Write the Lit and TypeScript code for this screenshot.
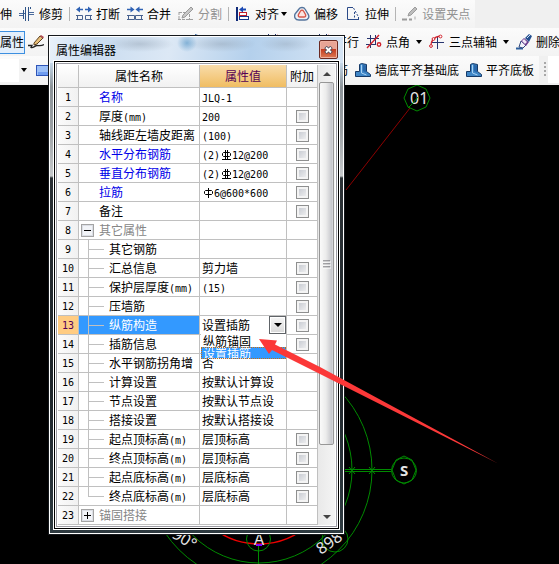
import { LitElement, html, svg, css, nothing, TemplateResult, SVGTemplateResult } from "lit";
import { customElement, property, state } from "lit/decorators.js";
import { classMap } from "lit/directives/class-map.js";

const ICONS: Record<string, SVGTemplateResult> = {
  trim: svg`<path d="M0 7.500h6M0 9.500h4M10 6.500h5M10 8.500h5" stroke="#4a6a9c" fill="none"/>
    <path d="M4.500 4v9M6.500 1v14M9.500 1v14M11.500 1v2" stroke="#2f5488" fill="none"/>`,
  break: svg`<path d="M4 .5L0 3.500l4 3zM12 .5l4 3-4 3z" fill="#2f62b4"/>
    <path d="M3 3.500h4M9 3.500h4" stroke="#2f62b4" stroke-width="1.500"/>
    <path d="M0 9.500h6.500v4H0M1.500 9.500v4M16 9.500H9.500v4H16M14.500 9.500v4" fill="none" stroke="#47618f"/>`,
  merge: svg`<path d="M3.500 .5L7.500 3.500l-4 3zM12.500 .5L8.500 3.500l4 3z" fill="#2f62b4"/>
    <path d="M0 3.500h4M12 3.500h4" stroke="#2f62b4" stroke-width="1.500"/>
    <path d="M0 9.500h7.500v4H0M1.500 9.500v4M16 9.500H8.500v4H16M14.500 9.500v4" fill="none" stroke="#47618f"/>`,
  split: svg`<path d="M1 6.500h7M1 6v8M0 13.500h15M11.500 8v6" stroke="#a0a0a0" fill="none" stroke-dasharray="3 1"/>
    <path d="M4 12l1-3 8-8 2 2-8 8z" fill="#c8c8c8" stroke="#9a9a9a"/>`,
  align: svg`<path d="M2 1v14" stroke="#102a78" stroke-width="2"/><path d="M11 3.500H6" stroke="#1b49b4" stroke-width="2"/><path d="M8 .5L4 3.500l4 3z" fill="#1b49b4"/>
    <rect x="4.500" y="6.500" width="7" height="3" fill="#fff" stroke="#c31f2c"/><rect x="4.500" y="10.500" width="9" height="3" fill="#fff" stroke="#17378c"/>`,
  offset: svg`<path d="M5 3c1-2 5-2 6 0l3 5c2 3 0 6-3 6H5c-4 0-5-3-4-6z" fill="#eef2f8" stroke="#55749c" stroke-width="1.400"/>
    <path d="M6.500 5c.5-1 2.500-1 3 0l2 3.500c.5 1.500 0 2.500-1.500 2.500H6c-1.500 0-2-1-1.500-2.500z" fill="#fde4e0" stroke="#d8584a" stroke-width="1.400"/>`,
  stretch: svg`<path d="M8 1.500H2.500v12H13" stroke="#2b4a88" fill="none"/><path d="M8.500 2l5 9" stroke="#2b4a88" fill="none" stroke-dasharray="2 1.500"/><path d="M9.500 6v7" stroke="#2b4a88" stroke-dasharray="2 1.500"/><path d="M13.500 11v3" stroke="#2b4a88"/>`,
  grip: svg`<path d="M0 13.500h5M7 13.500h3" stroke="#9a9a9a" stroke-width="2"/><path d="M6 10l1-3 6-6 2 2-6 6z" fill="#bdbdbd" stroke="#9c9c9c"/><path d="M13 10.500v3" stroke="#aaa"/>`,
  pencil: svg`<path d="M0 11.500h4l-1 2c2 1 4-2 6-2s4 1 7-1" stroke="#222" fill="none" stroke-width="1.300"/><path d="M6 9l6-7 3 2-6 6-3 1z" fill="#e8c07a" stroke="#5c4020"/><path d="M12 2l1-1 3 2-1 1.500z" fill="#b54a52"/>`,
  brush: svg`<path d="M1 14l3-5 3 3z" fill="#e8c880"/><path d="M4 9l7-7 3 2-7 8z" fill="#3d7bbd"/><path d="M11 0l3 1v3l-3-2z" fill="#2d5f9d"/>`,
  hash: svg`<path d="M4.500 0v15M11.500 0v15M0 4.500h15M0 11.500h16" stroke="#27356f"/><path d="M1 14L14 1" stroke="#d1222d" stroke-width="1.400"/>`,
  angle: svg`<path d="M4.500 1v13M9.500 1v10M1 4.500h12M0 10.500h10" stroke="#27356f"/><path d="M1 14L13 1" stroke="#d1222d" stroke-width="1.400"/><circle cx="13" cy="10.500" r="1.700" fill="#fff" stroke="#d1222d" stroke-width="1.400"/>`,
  three: svg`<path d="M8.500 3v12M3 8.500h12" stroke="#27356f"/><path d="M2 12C2 6 5 3 11 2" stroke="#d1222d" fill="none" stroke-width="1.300"/>
    <circle cx="2" cy="12" r="1.400" fill="#fff" stroke="#d1222d"/><circle cx="4.500" cy="5" r="1.400" fill="#fff" stroke="#d1222d"/><circle cx="11.500" cy="2.500" r="1.400" fill="#fff" stroke="#d1222d"/>`,
  eraser: svg`<path d="M0 14.500h7" stroke="#2d5f9d" stroke-width="2"/><path d="M3 13l2-6 5 4-3 3z" fill="#f2f2fa" stroke="#30487c"/><path d="M5 7l3-3 5 4-3 4z" fill="#6c3f8f"/><path d="M6 7l2-2 3 3-2 2z" fill="#f2e9f7"/><path d="M9 4l4-4 3 2-3 6z" fill="#244f8f"/><path d="M11 4l3-3" stroke="#cfe2f5"/>`,
  wall: svg`<path d="M4.500 2.500l2-1 5 1v7l4 3v2H.5v-5h4z" fill="#3f86c6" stroke="#163a68" stroke-linejoin="round"/><path d="M6.500 3v8l5 2" stroke="#a9d2f5" fill="none"/><path d="M8 3l3 .5v7L8 9z" fill="#2a68ab"/>`,
  beam: svg`<rect x=".5" y="3.500" width="15" height="10" fill="#9cc0f8" stroke="#2f55b8"/><path d="M2 11.500h13" stroke="#6f9cf0" stroke-width="3"/>`,
};

const icon = (name: string) =>
  html`<svg class="ico" width="16" height="16" viewBox="0 0 16 16" aria-hidden="true">${ICONS[name]}</svg>`;
const arrow = () =>
  html`<svg class="arrow" width="6" height="4" viewBox="0 0 6 4" aria-hidden="true"><path d="M0 0h6L3 4z" fill="#000"/></svg>`;

const baseText = css`
  :host {
    font: 12px/16px "Noto Sans CJK SC", sans-serif;
    color: #000;
  }
  * { box-sizing: border-box; }
  button, select, input { font: inherit; color: inherit; margin: 0; padding: 0; }
  svg { display: block; flex: none; }
`;

@customElement("tool-button")
export class ToolButton extends LitElement {
  @property() icon = "";
  @property() label = "";
  @property({ type: Boolean }) menu = false;
  @property({ type: Boolean }) disabled = false;

  static styles = [baseText, css`
    :host { display: block; flex: none; }
    button {
      display: flex; align-items: center; gap: 4px; height: 22px;
      border: 0; background: none; white-space: nowrap;
    }
    button:disabled { color: #929292; }
    .arrow { margin-left: var(--arrow-gap, 2px); }
  `];

  render() {
    return html`<button ?disabled=${this.disabled} aria-label=${this.label || this.icon}>
      ${this.icon ? icon(this.icon) : nothing}${this.label ? html`<span>${this.label}</span>` : nothing}${this.menu ? arrow() : nothing}
    </button>`;
  }
}

interface Row {
  name: string;
  value?: string;
  check?: boolean;
  kind?: "key" | "group" | "child";
  open?: boolean;
}

const ROWS: Row[] = [
  { name: "名称", value: "JLQ-1", kind: "key" },
  { name: "厚度(mm)", value: "200", check: true },
  { name: "轴线距左墙皮距离", value: "(100)", check: true },
  { name: "水平分布钢筋", value: "(2)#12@200", check: true, kind: "key" },
  { name: "垂直分布钢筋", value: "(2)#12@200", check: true, kind: "key" },
  { name: "拉筋", value: "ф6@600*600", check: true, kind: "key" },
  { name: "备注", check: true },
  { name: "其它属性", kind: "group", open: true },
  { name: "其它钢筋", kind: "child" },
  { name: "汇总信息", value: "剪力墙", check: true, kind: "child" },
  { name: "保护层厚度(mm)", value: "(15)", check: true, kind: "child" },
  { name: "压墙筋", check: true, kind: "child" },
  { name: "纵筋构造", value: "设置插筋", check: true, kind: "child" },
  { name: "插筋信息", check: true, kind: "child" },
  { name: "水平钢筋拐角增", value: "否", kind: "child" },
  { name: "计算设置", value: "按默认计算设", kind: "child" },
  { name: "节点设置", value: "按默认节点设", kind: "child" },
  { name: "搭接设置", value: "按默认搭接设", kind: "child" },
  { name: "起点顶标高(m)", value: "层顶标高", check: true, kind: "child" },
  { name: "终点顶标高(m)", value: "层顶标高", check: true, kind: "child" },
  { name: "起点底标高(m)", value: "层底标高", check: true, kind: "child" },
  { name: "终点底标高(m)", value: "层底标高", check: true, kind: "child" },
  { name: "锚固搭接", kind: "group" },
];
const ACTIVE = 12;
const OPTIONS = ["纵筋锚固", "设置插筋"];

/* Half-width runs use a 6px mono cell, bar symbols a full 12px cell. */
const mixed = (text: string): TemplateResult[] =>
  (text.match(/[ -"$-~]+|#|ф|[^ -~ф]+/g) ?? []).map((run) =>
    run === "#"
      ? html`<svg class="bar" width="12" height="12" viewBox="0 0 12 12" role="img" aria-label="HRB400"><path d="M5.500 1v10M7.500 1v10M2 10.500h9" stroke="#000" fill="none"/><path d="M3.500 3.500h6l1 1v2l-1 1h-6l-1-1v-2z" fill="none" stroke="#000"/></svg>`
      : run === "ф"
        ? html`<svg class="bar" width="12" height="12" viewBox="0 0 12 12" role="img" aria-label="HPB300"><path d="M6.500 1v10M3.500 3.500h6l1 1v2l-1 1h-6l-1-1v-2z" stroke="#000" fill="none"/></svg>`
        : /^[ -~]/.test(run)
          ? html`<span class="half">${run}</span>`
          : html`<span>${run}</span>`);

@customElement("property-editor")
export class PropertyEditor extends LitElement {
  @state() private choice = OPTIONS[1];

  static styles = [baseText, css`
    :host {
      display: block; border: 1px solid #15181c; color: #000;
    }
    .glass {
      border: 1px solid #fff; padding: 0 3px 3px;
      background:
        radial-gradient(ellipse 34px 8px at 90px 7px, #8797a866, transparent),
        radial-gradient(ellipse 10px 9px at 137px 6px, #3c86bd88, transparent),
        radial-gradient(ellipse 34px 8px at 172px 7px, #8797a866, transparent),
        radial-gradient(ellipse 26px 8px at 236px 7px, #8797a855, transparent),
        linear-gradient(100deg, #e9f1fa 0, #c9dcf0 45px, #dce8f5 120px, #b4d0ec 200px, #d6e5f5 100%) 0 0 / 100% 26px no-repeat,
        linear-gradient(#c5d8ea 26px, #8d9499 50px, #9a9fa3 90px, #c6c9cb 139px, #2c3236 141px, #20272c 70%, #2e3a40);
    }
    .title { display: flex; align-items: center; justify-content: space-between; height: 23px; padding: 2px 2px 0 3px; }
    h1 { margin: 0; font: inherit; }
    .close {
      display: grid; place-items: center; width: 19px; height: 19px;
      border: 1px solid #6b2a22; border-radius: 2px;
      box-shadow: inset 0 0 0 1px #f0b0a0;
      background: linear-gradient(#e8a495 45%, #c43d22 50%, #dd7a55);
    }
    .frame { border: 1px solid #fff; }
    .frame2 { border: 1px solid #000; }
    .frame3 { border: 1px solid #fff; }
    .client { display: flex; border: 1px solid #9c9ca4; padding: 1px; background: #fff; }
    table { flex: 1; min-width: 0; width: 100%; border-collapse: separate; border-spacing: 0; table-layout: fixed; }
    .c-num { width: 21px; } .c-name { width: 121px; } .c-add { width: 31px; }
    th, td {
      height: 19px; padding: 0; font-weight: normal; text-align: left; vertical-align: middle;
      line-height: 16px; border: 0 solid #c0c0c0; border-width: 0 1px 1px 0;
      white-space: nowrap; position: relative;
    }
    thead th { height: 23px; text-align: center; background: linear-gradient(#fff, #f1f1f1); }
    thead .hot { color: #550055; background: linear-gradient(#f9dcaa, #f0bd62); }
    tbody th { text-align: center; background: linear-gradient(90deg, #fbfbfb, #f1f1f1); }
    .half { font: 10px/16px "DejaVu Sans Mono", monospace; }
    .bar { display: inline-block; vertical-align: -2px; }
    .name { padding-left: 20px; }
    .text { display: block; overflow: hidden; height: 16px; }
    .val { padding-left: 2px; }
    .key .name { color: #0000e8; }
    .group .name { color: #868686; }
    .child .name { padding-left: 30px; }
    .child .name::before {
      content: ""; position: absolute; left: 9px; top: 0; width: 1px; height: 19px; background: #c0c0c0;
    }
    .child .name::after {
      content: ""; position: absolute; left: 9px; top: 9px; width: 16px; height: 1px; background: #c0c0c0;
    }
    .last .name::before { height: 9px; }
    .active th { background: #ffcc82; color: #550055; }
    .active .name { background: #3399ff; color: #fff; }
    .toggle {
      position: absolute; left: 2px; top: 3px; width: 13px; height: 13px;
      border: 1px solid #a4a4a4; background: #f2f4f8; box-shadow: inset 0 0 0 1px #dcdfe6;
    }
    .add { text-align: center; line-height: 0; }
    input {
      appearance: none; width: 13px; height: 13px; border: 1px solid #8e8f8f;
      background: linear-gradient(135deg, #c0c4cc, #f6f6f6); box-shadow: inset 0 0 0 2px #f4f4f4;
    }
    .pick { display: flex; height: 18px; position: relative; }
    select { appearance: none; flex: 1; border: 0; background: #fff; line-height: 16px; outline: 0; }
    .drop {
      position: absolute; right: 0; top: 0; width: 17px; height: 18px; pointer-events: none;
      display: grid; place-items: center;
      border: 1px solid #606468; background: linear-gradient(#f6f6f6, #d8d8d8); box-shadow: inset 0 0 0 1px #fff;
    }
    .list {
      position: absolute; z-index: 1; left: 1px; right: 0; top: 18px; margin: 0; padding: 1px 0 0; list-style: none; background: #fff;
    }
    .list li { height: 12px; line-height: 12px; padding-left: 2px; }
    .list .on { background: #3399ff; color: #fff; outline: 1px dotted #c86c10; outline-offset: -1px; }
    .scroll {
      flex: none; width: 17px; display: flex; flex-direction: column; align-items: center;
      background: linear-gradient(90deg, #e9e9e9, #f4f4f4);
    }
    .scroll svg { margin: 7px 0 6px; }
    .thumb {
      flex: 0 0 79%; width: 15px; display: grid; place-items: center;
      border: 1px solid #979797; border-radius: 2px;
      background: linear-gradient(90deg, #fafafa, #ececec 45%, #c6c7cc 90%, #dcdce0);
    }
    .space { flex: 1; }
  `];

  private valueCell(row: Row, i: number) {
    if (i !== ACTIVE) return html`<td class="val"><span class="text">${mixed(row.value ?? "")}</span></td>`;
    return html`<td class="val">
      <div class="pick">
        <select aria-label=${row.name} @change=${(e: Event) => (this.choice = (e.target as HTMLSelectElement).value)}>
          ${OPTIONS.map((o) => html`<option ?selected=${o === this.choice}>${o}</option>`)}
        </select>
        <span class="drop"><svg width="8" height="4" viewBox="0 0 8 4"><path d="M0 0h8L4 4z"/></svg></span>
      </div>
      <ul class="list" role="listbox" aria-label=${row.name}>
        ${OPTIONS.map((o) => html`<li role="option" aria-selected=${o === this.choice} class=${classMap({ on: o === this.choice })}
          @click=${() => (this.choice = o)}>${o}</li>`)}
      </ul>
    </td>`;
  }

  render() {
    return html`<div class="glass">
      <div class="title">
        <h1>属性编辑器</h1>
        <button class="close" aria-label="关闭">
          <svg width="9" height="8" viewBox="0 0 9 8"><path d="M1.500 1l6 6M7.500 1l-6 6" stroke="#4c4c5c" stroke-width="3.500"/><path d="M2 1.500l5 5M7 1.500l-5 5" stroke="#fff" stroke-width="1.800"/></svg>
        </button>
      </div>
      <div class="frame"><div class="frame2"><div class="frame3"><div class="client">
        <table>
          <colgroup><col class="c-num"><col class="c-name"><col><col class="c-add"></colgroup>
          <thead><tr><th></th><th>属性名称</th><th class="hot">属性值</th><th>附加</th></tr></thead>
          <tbody>
            ${ROWS.map((r, i) => html`<tr class=${classMap({ [r.kind ?? "plain"]: true, active: i === ACTIVE, last: i === 21 })}>
              <th scope="row"><span class="half">${i + 1}</span></th>
              <td class="name">${r.kind === "group"
                ? html`<button class="toggle" aria-label=${r.name} aria-expanded=${r.open ? "true" : "false"}>
                    <svg width="11" height="11" viewBox="0 0 11 11"><path d=${r.open ? "M2 5.500h7" : "M2 5.500h7M5.500 2v7"} stroke="#000"/></svg></button>`
                : nothing}<span class="text">${mixed(r.name)}</span></td>
              ${this.valueCell(r, i)}
              <td class="add">${r.check ? html`<input type="checkbox" aria-label=${"附加 " + r.name}>` : nothing}</td>
            </tr>`)}
          </tbody>
        </table>
        <div class="scroll">
          <svg width="8" height="4" viewBox="0 0 8 4"><path d="M0 4h8L4 0z" fill="#444"/></svg>
          <div class="thumb"><svg width="8" height="9" viewBox="0 0 8 9"><path d="M0 1h7M0 4h7M0 7h7" stroke="#55555a"/><path d="M0 2h8M0 5h8M0 8h8" stroke="#fff"/></svg></div>
          <div class="space"></div>
          <svg width="8" height="4" viewBox="0 0 8 4"><path d="M0 0h8L4 4z" fill="#444"/></svg>
        </div>
      </div></div></div></div>
    </div>`;
  }
}

@customElement("app-root")
export class AppRoot extends LitElement {
  static styles = [baseText, css`
    :host { display: block; }
    .app { position: relative; display: flex; flex-direction: column; min-height: 100vh; overflow: hidden; background: #000; }
    header { flex: none; background: #f0f0f0; padding-bottom: 1px; }
    .row { display: flex; height: 28px; overflow: hidden; }
    .panel { display: flex; flex: none; align-items: center; gap: 7px; background: linear-gradient(#fbfbfb, #f3f3f3); }
    .one { padding-right: 5px; }
    .two { flex: 1 0 auto; }
    .sep { flex: none; width: 1px; height: 14px; margin: 0 -1px; background: #b4b4b4; }
    .left { display: flex; align-items: center; gap: 3px; width: 177px; }
    .mid { width: 67px; }
    .toggled {
      flex: none; width: 25px; height: 23px; border: 1px solid #3c8fe0; border-left: 0; background: #e3effc;
      white-space: nowrap; text-align: left;
    }
    .combo { position: relative; width: 30px; height: 23px; display: flex; align-items: center; background: linear-gradient(90deg, #fff 19px, #f3f3f3 19px); }
    .combo select { appearance: none; position: absolute; inset: 0; border: 0; background: none; }
    .combo .arrow { margin-left: auto; margin-right: 3px; }
    .three { gap: 6px; width: 324px; }
    .bar3 { padding-right: 5px; }
    .grip { width: 2px; height: 16px; margin: 6px 2px 0 5px; background: repeating-linear-gradient(#a8a8a8 0 2px, transparent 2px 4px); }
    .blank { flex: 1; margin-bottom: 1px; background: #fff; }
    .stage { flex: 1; min-height: 479px; display: flex; }
    .drawing { flex: 1; height: auto; }
    .label { font-family: "Noto Sans", sans-serif; fill: #e4e4e4; }
    .dialog { position: absolute; z-index: 0; left: 48px; top: 35px; width: 297px; }
    .pointer { position: absolute; z-index: 1; inset: 0; width: 100%; height: 100%; pointer-events: none; }
  `];

  render() {
    return html`<div class="app">
      <header>
        <div class="row"><div class="panel one">
          <tool-button label="伸"></tool-button>
          <tool-button icon="trim" label="修剪"></tool-button>
          <span class="sep"></span>
          <tool-button icon="break" label="打断"></tool-button>
          <tool-button icon="merge" label="合并"></tool-button>
          <tool-button icon="split" label="分割" disabled></tool-button>
          <span class="sep"></span>
          <tool-button icon="align" label="对齐" menu style="--arrow-gap: -2px"></tool-button>
          <tool-button icon="offset" label="偏移"></tool-button>
          <tool-button icon="stretch" label="拉伸"></tool-button>
          <span class="sep"></span>
          <tool-button icon="grip" label="设置夹点" disabled></tool-button>
        </div></div>
        <div class="row"><div class="panel two">
          <div class="left"><button class="toggled">属性</button><tool-button icon="pencil"></tool-button></div>
          <tool-button class="mid" icon="brush"></tool-button>
          <span class="sep"></span>
          <tool-button icon="hash" label="两点"></tool-button>
          <tool-button icon="hash" label="平行"></tool-button>
          <tool-button icon="angle" label="点角" menu></tool-button>
          <tool-button icon="three" label="三点辅轴" menu></tool-button>
          <tool-button icon="eraser" label="删除"></tool-button>
        </div></div>
        <div class="row">
          <div class="panel three">
            <div class="combo"><select aria-label="构件"><option></option></select>${arrow()}</div>
            <tool-button icon="beam"></tool-button>
          </div>
          <div class="panel bar3">
            <tool-button label="钢筋"></tool-button>
            <tool-button icon="wall" label="墙底平齐基础底"></tool-button>
            <tool-button icon="wall" label="平齐底板"></tool-button>
          </div>
          <span class="grip"></span><span class="blank"></span>
        </div>
      </header>
      <main class="stage">
        <svg class="drawing" role="img" aria-label="轴网">
          <g transform="translate(0 -85)" fill="none" stroke="#008a00">
            <path d="M346 190L410 108" stroke="#8c0000"/>
            <path d="M408 108l4-4"/>
            <path d="M417 85l9 4 4 9-4 9-9 4-9-4-4-9 4-9z"/>
            <circle cx="259" cy="470" r="113"/>
            <circle cx="259" cy="470" r="93"/>
            <circle cx="259" cy="470" r="74" stroke="#f00000" stroke-width="1.400"/>
            <path d="M340 469.500h51M340 471.500h51M349 467l6 7M355 467l-6 7M369 467l6 7M375 467l-6 7"/>
            <circle cx="404" cy="470.500" r="12.500"/>
            <path d="M404 456l8 4 4 10-4 10-8 4-8-4-4-10 4-10z"/>
            <circle cx="258.500" cy="539" r="12"/>
            <circle cx="335" cy="539" r="13"/>
            <path d="M258.500 545v25"/>
            <path d="M256 545h6" stroke="#8000ff" stroke-width="2"/>
          </g>
          <g class="label" transform="translate(0 -85)" font-size="16">
            <text x="410" y="104">01</text>
            <text x="400" y="476" font-size="15" font-weight="bold">S</text>
            <text x="254" y="545">A</text>
            <text transform="translate(171 537) rotate(32)">90°</text>
            <text transform="translate(321 555) rotate(-35)">898</text>
          </g>
          <path d="M412 19l6-7" stroke="#008a00"/>
        </svg>
      </main>
      <property-editor class="dialog"></property-editor>
      <svg class="pointer" aria-hidden="true">
        <path d="M259 339L277 340.500L275 344.500L320 367L498 463.500L320 374L272 350L269 354z" fill="#fb3838"/>
      </svg>
    </div>`;
  }
}
